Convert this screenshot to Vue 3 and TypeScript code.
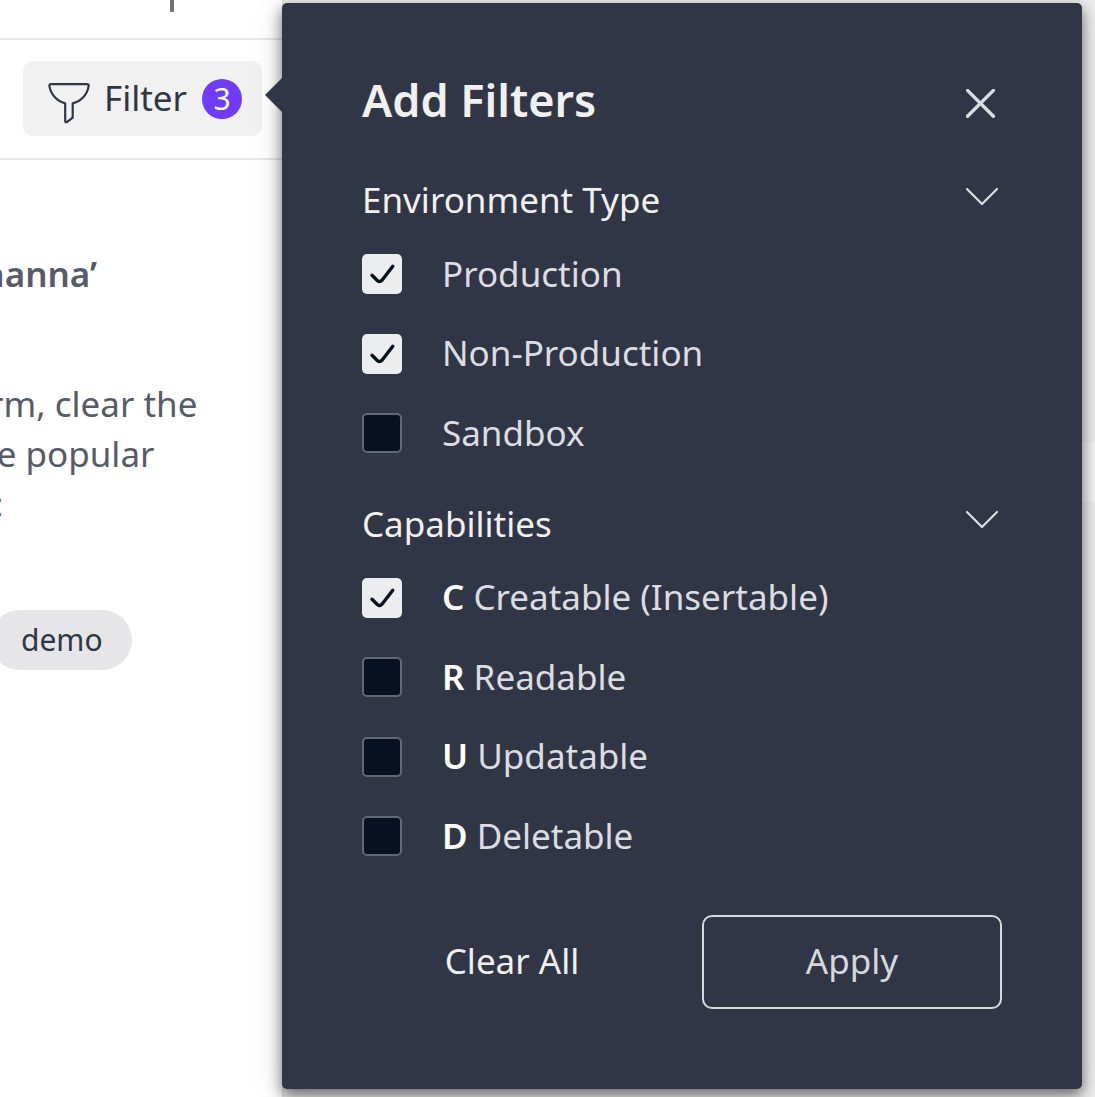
<script setup lang="ts">
import { ref } from 'vue'

interface Option {
  letter?: string
  label: string
  checked: boolean
}

interface Group {
  key: string
  title: string
  options: Option[]
}

const activeCount = 3

const groups = ref<Group[]>([
  {
    key: 'environment',
    title: 'Environment Type',
    options: [
      { label: 'Production', checked: true },
      { label: 'Non-Production', checked: true },
      { label: 'Sandbox', checked: false },
    ],
  },
  {
    key: 'capabilities',
    title: 'Capabilities',
    options: [
      { letter: 'C', label: 'Creatable (Insertable)', checked: true },
      { letter: 'R', label: 'Readable', checked: false },
      { letter: 'U', label: 'Updatable', checked: false },
      { letter: 'D', label: 'Deletable', checked: false },
    ],
  },
])

function toggle(option: Option): void {
  option.checked = !option.checked
}
</script>

<template>
  <div class="screen">
    <main class="page">
      <div class="topbar"><span class="tick"></span></div>
      <div class="toolbar">
        <button class="filter" type="button">
          <svg class="funnel" width="44" height="44" viewBox="0 0 44 44" fill="none">
            <path
              d="M4 4.1H40Q42 4.1 41.6 6.1C40.4 14.5 34.4 21.2 25.7 23.4V37.6L19.8 42.1Q18.2 42.6 18.2 41V23.4C9.8 21.2 3.8 14.5 2.4 6.1Q2.1 4.1 4 4.1Z"
              stroke="#2f3646"
              stroke-width="2.2"
              stroke-linejoin="round"
            />
          </svg>
          <span class="filter-label">Filter</span>
          <span class="badge">{{ activeCount }}</span>
        </button>
      </div>
      <div class="empty">
        <h2 class="line headline"><span>hanna’</span></h2>
        <p class="line first"><span>rm, clear the</span></p>
        <p class="line second"><span>e popular</span></p>
        <p class="line third"><span>:</span></p>
        <div class="tag">demo</div>
      </div>
    </main>
    <aside class="side"><div class="side-row"></div></aside>

    <section class="panel">
      <header class="head">
        <h1>Add Filters</h1>
        <svg class="close" width="30" height="30" viewBox="0 0 30 30" fill="none">
          <path d="M1.5 1.4L27.4 27.3M27.4 1.4L1.5 27.3" stroke="#dcdde0" stroke-width="3.4" stroke-linecap="round" />
        </svg>
      </header>

      <div v-for="group in groups" :key="group.key" class="group" :class="group.key">
        <div class="group-head">
          <h3>{{ group.title }}</h3>
          <svg class="chevron" width="34" height="20" viewBox="0 0 34 20" fill="none">
            <path d="M2 2L17 17L32 2" stroke="#dcdde0" stroke-width="2.2" stroke-linecap="round" stroke-linejoin="round" />
          </svg>
        </div>
        <div class="options">
          <div v-for="option in group.options" :key="option.label" class="option" @click="toggle(option)">
            <span class="box" :class="{ checked: option.checked }">
              <svg v-if="option.checked" width="40" height="40" viewBox="0 0 40 40" fill="none">
                <path
                  d="M10 21.2L15.6 26.7Q17.9 28.6 20 26.2L30.8 12.3"
                  stroke="#081122"
                  stroke-width="3.4"
                  stroke-linecap="round"
                  stroke-linejoin="round"
                />
              </svg>
            </span>
            <span class="text"><b v-if="option.letter">{{ option.letter }}</b>{{ option.letter ? ' ' : '' }}{{ option.label }}</span>
          </div>
        </div>
      </div>

      <footer class="actions">
        <button class="clear" type="button">Clear All</button>
        <button class="apply" type="button">Apply</button>
      </footer>
    </section>
  </div>
</template>

<style>
body {
  margin: 0;
  overflow: hidden;
  background: #fff;
}
</style>

<style scoped>
.screen {
  position: relative;
  display: flex;
  width: 1095px;
  height: 1097px;
  overflow: hidden;
  font-family: 'Noto Sans', sans-serif;
  font-size: 35px;
  line-height: 50px;
}

h1,
h2,
h3,
p {
  margin: 0;
  font-size: inherit;
  font-weight: 400;
}

button {
  border: 0;
  padding: 0;
  background: none;
  font: inherit;
}

.page {
  flex: none;
  width: 282px;
  overflow: hidden;
}

.topbar {
  box-sizing: border-box;
  height: 40px;
  padding-left: 170px;
  border-bottom: 2px solid #e6e6e6;
}

.tick {
  display: block;
  width: 4px;
  height: 12px;
  border-radius: 0 0 1px 1px;
  background: #6e727d;
}

.toolbar {
  box-sizing: border-box;
  height: 120px;
  padding: 21px 0 0 23px;
  border-bottom: 2px solid #e6e6e6;
}

.filter {
  display: flex;
  align-items: center;
  box-sizing: border-box;
  width: 239px;
  height: 75px;
  padding-left: 24px;
  border-radius: 10px;
  background: #f1f1f1;
  color: #2f3646;
}

.funnel {
  flex: none;
  margin-top: 7px;
}

.filter-label {
  box-sizing: border-box;
  width: 101px;
  margin-bottom: 2px;
  padding-left: 8px;
  text-align: center;
}

.badge {
  width: 40px;
  height: 40px;
  margin-left: 10px;
  border-radius: 50%;
  background: #6e3bff;
  color: #fff;
  font-size: 30px;
  line-height: 40px;
  text-align: center;
}

.empty {
  padding-top: 89px;
  color: #555b68;
}

/* Lines run off the left edge, so each one is anchored on its right end. */
.line {
  display: flex;
  justify-content: flex-end;
  white-space: pre;
}

.headline {
  width: 97px;
  margin-bottom: 80px;
  font-weight: 600;
}

.first {
  width: 197.5px;
}

.second {
  width: 154.5px;
}

.third {
  width: 3.5px;
}

.tag {
  box-sizing: border-box;
  width: 142px;
  height: 60px;
  margin: 81px 0 0 -10px;
  padding-left: 31px;
  border-radius: 30px;
  background: #e6e6e8;
  color: #2f3646;
  font-size: 30px;
  line-height: 60px;
}

.side {
  flex: 1;
  padding-top: 442px;
  border-left: 2px solid #e6e6e6;
  background: #f0f0f0;
}

.side-row {
  height: 60px;
  background: #f8f8f8;
}

.panel {
  position: absolute;
  top: 3px;
  left: 282px;
  box-sizing: border-box;
  width: 800px;
  height: 1086px;
  padding: 72px 80px 0;
  border-radius: 5px;
  background: #303646;
  color: #f0f0f0;
  box-shadow:
    0 6px 28px 4px rgba(0, 0, 0, 0.12),
    0 6px 14px rgba(0, 0, 0, 0.5);
}

.panel::before {
  content: '';
  position: absolute;
  top: 75px;
  left: -17px;
  width: 17px;
  height: 34px;
  background: #303646;
  clip-path: polygon(0 50%, 100% 0, 100% 100%);
}

.head {
  display: flex;
  justify-content: space-between;
  height: 100px;
}

.head h1 {
  font-size: 45px;
  font-weight: 600;
}

.close {
  margin: 14px 6px 0 0;
}

.group-head {
  display: flex;
  justify-content: space-between;
}

.chevron {
  margin: 11.7px 3px 0 0;
}

.group {
  height: 323.5px;
}

.options {
  display: flex;
  flex-direction: column;
  gap: 39.5px;
  padding-top: 29px;
}

.option {
  display: flex;
  gap: 40px;
  height: 40px;
}

.box {
  box-sizing: border-box;
  width: 40px;
  height: 40px;
  border: 2px solid #636875;
  border-radius: 5px;
  background: #081122;
}

.box.checked {
  border: 0;
  background: #ebedef;
}

.box svg {
  display: block;
}

.text {
  margin-top: -0.3px;
  color: #dcdde0;
  line-height: 40px;
  white-space: pre;
}

.text b {
  color: #fff;
  font-weight: 600;
}

.actions {
  display: flex;
  margin-top: 93px;
}

.clear {
  width: 300px;
  height: 94px;
  padding-bottom: 2px;
  color: #f0f0f0;
}

.apply {
  box-sizing: border-box;
  width: 300px;
  height: 94px;
  margin-left: 40px;
  padding-bottom: 2px;
  border: 2px solid #d6d8db;
  border-radius: 10px;
  color: #d6d8db;
}
</style>
